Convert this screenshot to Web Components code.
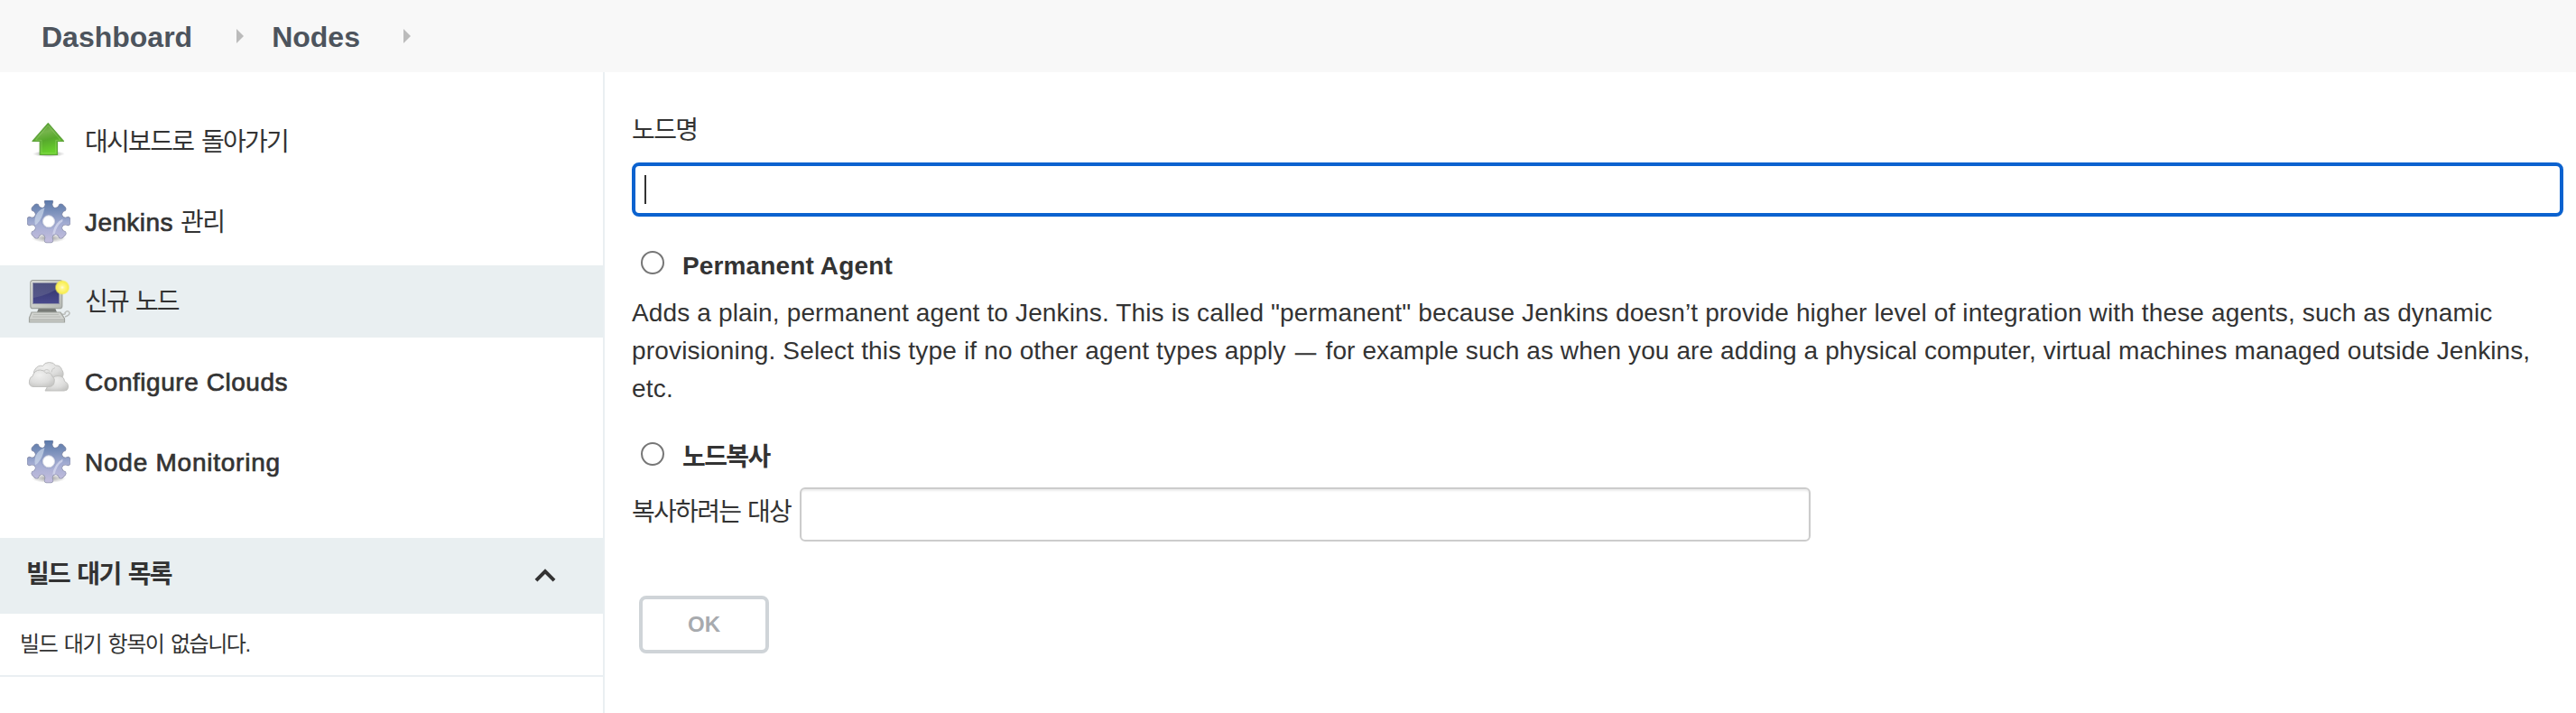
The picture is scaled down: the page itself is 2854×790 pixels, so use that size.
<!DOCTYPE html>
<html lang="ko">
<head>
<meta charset="utf-8">
<title>Nodes [Jenkins]</title>
<style>
  body { margin: 0; background: #fff; color: #333; font: 28px/42px "Liberation Sans", "Noto Sans CJK KR", sans-serif; }
</style>
</head>
<body>
<jenkins-page>
  <crumb-bar slot="header">
    <crumb-item style="--ls:0px;--gap:49px">Dashboard</crumb-item>
    <crumb-item style="--ls:0px;--gap:48px">Nodes</crumb-item>
  </crumb-bar>
  <side-tasks slot="side">
    <task-link icon="up"><k-t ls="-1.7" ws="2.5">대시보드로 돌아가기</k-t></task-link>
    <task-link icon="gear"><k-t ls=".41" class="m">Jenkins </k-t><k-t ls="-1.5">관리</k-t></task-link>
    <task-link icon="computer" selected><k-t ls="-1.8" ws="2">신규 노드</k-t></task-link>
    <task-link icon="clouds"><k-t ls=".55" class="m">Configure Clouds</k-t></task-link>
    <task-link icon="gear"><k-t ls=".76" class="m">Node Monitoring</k-t></task-link>
  </side-tasks>
  <queue-panel slot="side">
    <k-t slot="title" ls="-1.65" ws="2">빌드 대기 목록</k-t>
    <k-t ls="-1.45" ws="2.3">빌드 대기 항목이 없습니다.</k-t>
  </queue-panel>
  <node-form></node-form>
</jenkins-page>

<script>
const define = (name, html, setup) => customElements.define(name, class extends HTMLElement {
  constructor() {
    super();
    const t = document.createElement('template');
    t.innerHTML = html;
    this.attachShadow({ mode: 'open' }).append(t.content.cloneNode(true));
  }
  connectedCallback() { if (setup) setup(this, this.shadowRoot); }
});

/* Text run with its own tracking and word spacing */
define('k-t', `<style>
  :host { display: inline; white-space: pre; }
  :host(.m) { -webkit-text-stroke: .7px currentColor; }
</style><slot></slot>`, el => {
  el.style.letterSpacing = el.getAttribute('ls') + 'px';
  el.style.wordSpacing = (el.getAttribute('ws') || 0) + 'px';
});

define('jenkins-page', `<style>
  :host { display: grid; grid-template: 80px 710px / 670px 1fr; height: 790px; overflow: hidden; }
  header { grid-column: 1 / -1; background: #f8f8f8; }
  aside { box-sizing: border-box; border-right: 2px solid #eaeff2; }
  main { padding: 44px 14px 0 30px; }
</style>
<header><slot name="header"></slot></header>
<aside><slot name="side"></slot></aside>
<main><slot></slot></main>`);

define('crumb-bar', `<style>
  :host { display: flex; align-items: center; height: 80px; padding-left: 46px; }
</style><slot></slot>`);

define('crumb-item', `<style>
  :host { display: flex; align-items: center; color: #4d545d; font-size: 32px; font-weight: 700; letter-spacing: var(--ls); }
  span { padding-top: 2px; }
  svg { margin: 0 31px 0 var(--gap); width: 8px; height: 16px; }
</style><span><slot></slot></span><svg viewBox="0 0 8 16"><path d="M0 0L8 8L0 16Z" fill="#bbb"/></svg>`);

const icons = {
  up: `<defs>
    <linearGradient id="a" x1="0" y1="0" x2=".25" y2="1"><stop offset="0" stop-color="#4b9425"/><stop offset=".35" stop-color="#76b44c"/><stop offset=".6" stop-color="#57a92c"/><stop offset="1" stop-color="#69d12c"/></linearGradient>
    <radialGradient id="s"><stop offset="0" stop-color="#000" stop-opacity=".45"/><stop offset="1" stop-color="#000" stop-opacity="0"/></radialGradient></defs>
    <ellipse cx="24" cy="37.5" rx="18" ry="3.5" fill="url(#s)"/>
    <path d="M23.3 3.600L40.500 23.500H33.500V38.500H14.200V23.500H6Z" fill="url(#a)" stroke="#5fa43b" stroke-width="1.200" stroke-linejoin="round"/>
    <path d="M16 36.800V22.300H9.500L23.300 6L37 22.300H31.800V36.800Z" fill="none" stroke="#9bd873" stroke-opacity=".45"/>`,
  gear: `<defs>
    <linearGradient id="g" x1="24" y1="0" x2="24" y2="47" gradientUnits="userSpaceOnUse"><stop offset="0" stop-color="#5b78a8"/><stop offset=".3" stop-color="#7f93bd"/><stop offset=".55" stop-color="#a3acd2"/><stop offset="1" stop-color="#c6bfdf"/></linearGradient>
    <radialGradient id="s"><stop offset="0" stop-color="#000" stop-opacity=".4"/><stop offset="1" stop-color="#000" stop-opacity="0"/></radialGradient>
    <path id="t" d="M-6.500 -14Q-3.800 -16 -3.700 -18.500L-4.600 -21.500Q-4.200 -23.300 -2.500 -23.600H2.500Q4.200 -23.300 4.600 -21.500L3.700 -18.500Q3.800 -16 6.500 -14Z"/>
    <g id="b"><circle r="16"/><use href="#t"/><use href="#t" transform="rotate(45)"/><use href="#t" transform="rotate(90)"/><use href="#t" transform="rotate(135)"/><use href="#t" transform="rotate(180)"/><use href="#t" transform="rotate(225)"/><use href="#t" transform="rotate(270)"/><use href="#t" transform="rotate(315)"/></g>
    <clipPath id="c"><circle cx="24" cy="23" r="15.500"/></clipPath>
    <mask id="m" maskUnits="userSpaceOnUse" x="0" y="0" width="48" height="48"><rect width="48" height="48" fill="#000"/><g transform="translate(24 23)"><use href="#b" fill="#fff"/></g></mask></defs>
    <ellipse cx="24" cy="42" rx="19" ry="5" fill="url(#s)"/>
    <g transform="translate(24 23)" stroke="#8d92ab" stroke-width="1.200"><use href="#b"/></g>
    <rect width="48" height="48" fill="url(#g)" mask="url(#m)"/>
    <g clip-path="url(#c)"><path d="M4 30Q14 27 18 14L20 6H4Z" fill="#d7e2f1" opacity=".6"/><path d="M44 20Q30 24 29 42" fill="none" stroke="#d5daef" stroke-width="2.500" opacity=".75"/></g>
    <circle cx="24" cy="23" r="8.500" fill="#8c98bf" opacity=".35"/><circle cx="24" cy="23.300" r="6.500" fill="#fff" stroke="#d5d8e4"/>`,
  computer: `<defs>
    <linearGradient id="f" x1="0" y1="0" x2="1" y2="1"><stop offset="0" stop-color="#e2e4df"/><stop offset="1" stop-color="#b4b7b2"/></linearGradient>
    <linearGradient id="n" x1="0" y1="0" x2="0" y2="1"><stop offset="0" stop-color="#2f3268"/><stop offset="1" stop-color="#4a4a8d"/></linearGradient>
    <linearGradient id="h" x1="0" y1="0" x2="1" y2="1"><stop offset="0" stop-color="#70739a"/><stop offset="1" stop-color="#65678e"/></linearGradient>
    <radialGradient id="y"><stop offset="0" stop-color="#fffde0"/><stop offset=".25" stop-color="#fff68a"/><stop offset=".78" stop-color="#f8ee50"/><stop offset="1" stop-color="#f5ec55" stop-opacity="0"/></radialGradient></defs>
    <path d="M38 38Q43 39 42 36.500Q45 33 47 36.500Q47.500 39 42 41" fill="none" stroke="#babdba" stroke-width="1.500"/>
    <path d="M13 31H31L33 36H11Z" fill="#777a76"/>
    <rect x="3.800" y=".7" width="35" height="31" rx="2.500" fill="url(#f)" stroke="#a0a39e" stroke-width="1.200"/>
    <rect x="6.500" y="3.500" width="29" height="23" fill="url(#n)" stroke="#8c8ea5"/>
    <path d="M7 4H35V8Q27 16 7 20Z" fill="url(#h)" opacity=".5"/>
    <path d="M5 36H37L41.500 43V47H2.500V42Z" fill="#d0d2ce" stroke="#a0a39e" stroke-width="1.200"/>
    <path d="M7 38.500H35M6 41H37" stroke="#b9bcb7" stroke-width="1.200"/><path d="M3 44.500H41" stroke="#b0b3ae" stroke-width="1.500"/>
    <circle cx="39" cy="8.500" r="8.500" fill="url(#y)"/>`,
  clouds: `<defs><radialGradient id="w" cx=".4" cy=".3" r=".8"><stop offset="0" stop-color="#f0f0ef"/><stop offset=".6" stop-color="#dddddc"/><stop offset="1" stop-color="#c3c3c1"/></radialGradient></defs>
    <g fill="url(#w)" stroke="#c2c2c0" stroke-width="1" transform="translate(0 .5)">
    <path d="M9 19Q6 13 9 9.500Q12 4.500 17.500 6Q19 2 24.500 2Q30 2 31.500 5.500Q37 5 38.500 10Q42 15 38 20Z"/>
    <path d="M18 12Q22 8 25 12M31 8Q27 9 27 13" fill="none" stroke="#c9c9c7"/>
    <path d="M20 33.500Q22 28 27 25Q27 17 34 17Q41 17 41.500 23Q46 25 45.500 30Q45 33.500 41 33.500Z"/>
    <path d="M7 29Q1.500 28.500 2.500 22.500Q3 18 6 17.500Q8 10.500 14.500 10.500Q19 10.500 21 14Q26 12 28 17.500Q31.500 20 30 24.500Q29 29 24 29Z"/></g>`
};

define('task-link', `<style>
  :host { display: flex; align-items: center; gap: 16px; height: 80px; box-sizing: border-box; padding-left: 30px; }
  :host([selected]) { background: #e9eff1; }
  span { padding-top: 2px; }
  svg { width: 48px; height: 48px; flex: none; display: block; }
</style><svg viewBox="0 0 48 48"></svg><span><slot></slot></span>`, (el, root) => {
  root.querySelector('svg').innerHTML = icons[el.getAttribute('icon')];
});

define('side-tasks', `<style>
  :host { display: grid; grid-template-rows: 89px 88px 89px 89px 80px; align-items: start; padding: 37px 0 44px; }
</style><slot></slot>`);

define('queue-panel', `<style>
  :host { display: block; border-bottom: 2px solid #eaeff2; }
  header { display: flex; align-items: center; justify-content: space-between; height: 84px; padding: 0 52px 0 29px; background: #e9eff1; font-weight: 700; }
  header div { padding-bottom: 2px; }
  div.empty { height: 68px; line-height: 67px; padding-left: 22px; font-size: 24px; }
  svg { width: 24px; height: 16px; }
</style>
<header><div><slot name="title"></slot></div>
<svg viewBox="0 0 24 16"><path d="M2 13.200L12 3.200L22 13.200" fill="none" stroke="#333" stroke-width="4"/></svg></header>
<div class="empty"><slot></slot></div>`);

define('text-box', `<style>
  :host { display: flex; align-items: center; box-sizing: border-box; height: 60px; border: 2px solid #ccc; border-radius: 6px; background: #fff; box-shadow: inset 0 2px 2px rgba(0,0,0,.075); }
  :host([focused]) { border: 4px solid #0b62cf; border-radius: 8px; box-shadow: none; padding-left: 10px; }
  i { display: none; width: 2px; height: 32px; background: #333; }
  :host([focused]) i { display: block; }
</style><i></i>`);

define('radio-row', `<style>
  :host { display: flex; gap: 20px; padding-left: 10px; height: 42px; font-weight: 700; }
  i { box-sizing: border-box; width: 26px; height: 26px; margin-top: 4px; border: 2px solid #767676; border-radius: 50%; background: #fff; }
</style><i></i><slot></slot>`);

define('ok-button', `<style>
  :host { display: flex; align-items: center; justify-content: center; box-sizing: border-box; width: 144px; height: 64px; border: 4px solid #cfd4d8; border-radius: 8px; color: #a7aaae; font-size: 24px; font-weight: 700; }
</style><slot></slot>`);

define('node-form', `<style>
  :host { display: block; }
  .name { padding-bottom: 14px; line-height: 42px; }
  radio-row.first { margin-top: 34px; }
  p { margin: 10px 0 0; }
  .dash { font-size: 23px; line-height: 0; margin: 0 2.5px; -webkit-text-stroke: .5px currentColor; }
  radio-row.second { margin-top: 34px; }
  .copy { display: flex; padding-top: 12px; }
  .copy label { width: 186px; padding-top: 7px; height: 53px; }
  .copy text-box { width: 1120px; }
  ok-button { margin: 60px 0 0 8px; }
</style>
<div class="name"><k-t ls="-1.6">노드명</k-t></div>
<text-box focused></text-box>
<radio-row class="first"><k-t ls=".14">Permanent Agent</k-t></radio-row>
<p><k-t ls=".143">Adds a plain, permanent agent to Jenkins. This is called "permanent" because Jenkins doesn’t provide higher level of integration with these agents, such as dynamic</k-t><br><k-t ls=".17">provisioning. Select this type if no other agent types apply <k-t ls="0" class="dash">—</k-t> </k-t><k-t ls=".1">for example such as when you are adding a physical computer, virtual machines managed outside Jenkins,</k-t><br><k-t ls=".2">etc.</k-t></p>
<radio-row class="second"><k-t ls="-1.6">노드복사</k-t></radio-row>
<div class="copy"><label><k-t ls="-1.7" ws="1.5">복사하려는 대상</k-t></label><text-box></text-box></div>
<ok-button>OK</ok-button>`);
</script>
</body>
</html>
